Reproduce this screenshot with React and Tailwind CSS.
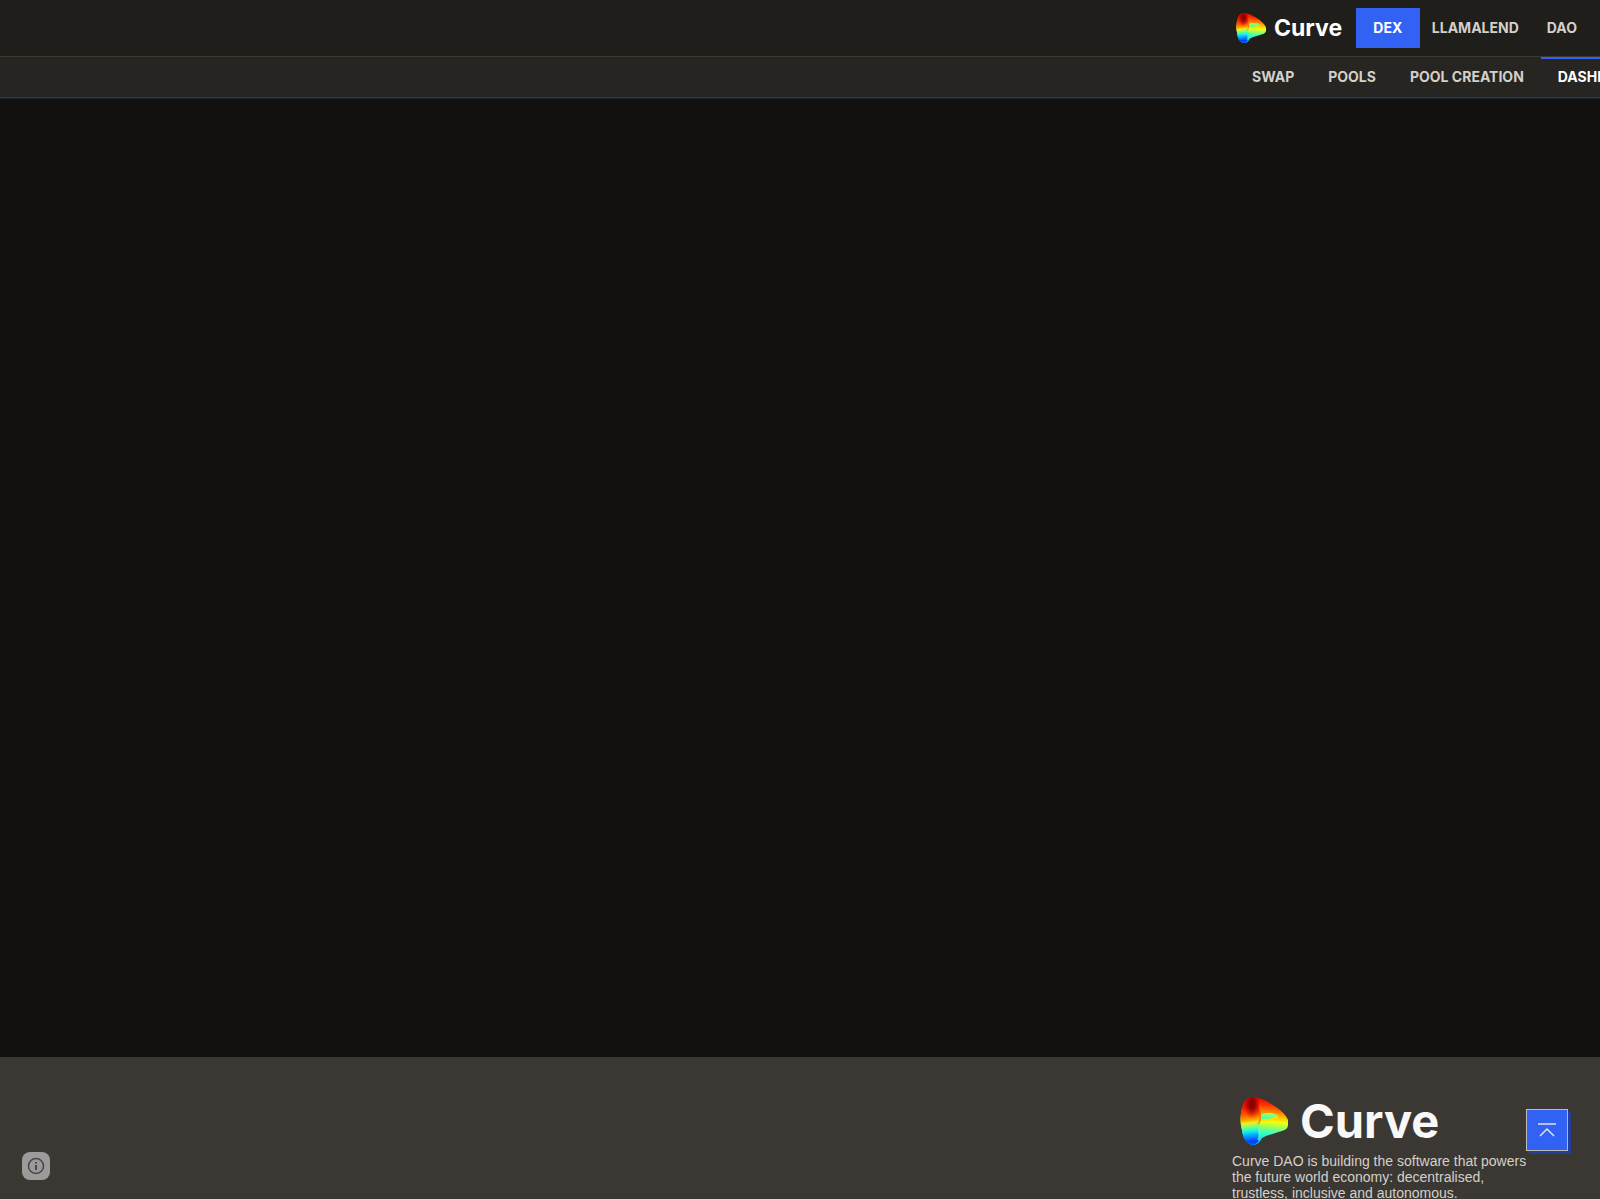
import React from "react";

const OUTLINE =
  "M13 0C18 0 27 4 33 8C41 13 46 18 48 23L48 28C48 31 46 33 42 34C36 36 27 38 22 41C20 45 17 48 13 48C7 47 3 42 2 33C0 26 0 16 3 8C5 3 8 0 13 0Z";
const BAND =
  "M13 0C17 4 21 13 21 23C20 27 18 29 18 33C19 38 20 41 18 45C16 47 15 48 13 48C7 47 3 42 2 33C0 26 0 16 3 8C5 3 8 0 13 0Z";

function CurveMark({ className, id }) {
  return (
    <svg viewBox="0 0 48 48" className={className} aria-hidden="true">
      <defs>
        <linearGradient id={id + "-body"} x1="24" y1="0" x2="20" y2="46" gradientUnits="userSpaceOnUse">
          <stop offset="0" stopColor="#e00400" />
          <stop offset=".16" stopColor="#ff3000" />
          <stop offset=".32" stopColor="#ff8800" />
          <stop offset=".44" stopColor="#ffd000" />
          <stop offset=".53" stopColor="#f0ff10" />
          <stop offset=".64" stopColor="#98ff60" />
          <stop offset=".78" stopColor="#30ffc8" />
          <stop offset="1" stopColor="#00d0ff" />
        </linearGradient>
        <linearGradient id={id + "-band"} x1="7" y1="0" x2="12" y2="48" gradientUnits="userSpaceOnUse">
          <stop offset="0" stopColor="#e00000" />
          <stop offset=".2" stopColor="#f01800" />
          <stop offset=".36" stopColor="#ff5400" />
          <stop offset=".48" stopColor="#ffa800" />
          <stop offset=".54" stopColor="#f0f010" />
          <stop offset=".62" stopColor="#80ff78" />
          <stop offset=".7" stopColor="#20f8e0" />
          <stop offset=".8" stopColor="#00a8ff" />
          <stop offset=".92" stopColor="#0040ff" />
          <stop offset="1" stopColor="#0060ff" />
        </linearGradient>
        <radialGradient id={id + "-dark"} cx="0" cy="0" r="1" gradientTransform="translate(12 7) scale(9 15)" gradientUnits="userSpaceOnUse">
          <stop offset="0" stopColor="#800000" />
          <stop offset=".35" stopColor="#900000" stopOpacity=".9" />
          <stop offset="1" stopColor="#d80000" stopOpacity="0" />
        </radialGradient>
        <linearGradient id={id + "-inner"} x1="0" y1="0" x2="0" y2="1">
          <stop offset="0" stopColor="#a0ff58" />
          <stop offset="1" stopColor="#40ffb8" />
        </linearGradient>
      </defs>
      <path d={OUTLINE} fill={"url(#" + id + "-body)"} />
      <path d="M21 17C28 15 36 16 38 19C35 22 28 22 21 23Z" fill={"url(#" + id + "-inner)"} />
      <path d="M21 23C29 23 36 22 38 19" fill="none" stroke="#ffe000" strokeWidth="1.5" />
      <path d={BAND} fill={"url(#" + id + "-band)"} />
      <path d={OUTLINE} fill={"url(#" + id + "-dark)"} />
      <path d="M20 16C21 21 20 25 18 27" fill="none" stroke="#ff7000" strokeWidth="1.5" opacity=".8" />
      <path d="M17 27C20 32 20 38 18 43" fill="none" stroke="#60ffb0" strokeWidth="1.5" opacity=".7" />
    </svg>
  );
}

function Tab({ children, active }) {
  return (
    <a
      href="#"
      aria-current={active ? "page" : undefined}
      className={
        "flex h-10 shrink-0 items-center border-t-2 px-[17px] pb-0.5 text-sm font-bold " +
        (active ? "border-[#3162f4] text-white" : "border-transparent text-[#d4d0ca]")
      }
    >
      {children}
    </a>
  );
}

export default function App() {
  return (
    <div className="flex min-h-screen flex-col overflow-hidden bg-[#11100e] font-['Inter',sans-serif]">
      <header className="shadow-[0_1px_1px_#18202a]">
        <div className="border-b border-[#3c3834] bg-[#1f1e1a]">
          <div className="ml-auto flex h-14 w-92 items-center">
            <a href="#" className="flex items-center gap-2 pl-1 text-[23px] font-bold text-white">
              <CurveMark id="top" className="size-[30px]" />
              Curve
            </a>
            <nav className="ml-auto flex whitespace-nowrap pr-[7px] text-sm font-bold text-[#d4d0ca]">
              <a href="#" className="flex h-10 w-16 items-center justify-center bg-[#3162f4] text-white">DEX</a>
              <a href="#" className="flex h-10 items-center px-3">LLAMALEND</a>
              <a href="#" className="flex h-10 items-center px-4">DAO</a>
            </nav>
          </div>
        </div>
        <div className="border-b border-[#3c3834] bg-[#262521]">
          <nav className="ml-auto flex w-[365px] overflow-hidden whitespace-nowrap">
            <Tab>SWAP</Tab>
            <Tab>POOLS</Tab>
            <Tab>POOL CREATION</Tab>
            <Tab active>DASHBOARD</Tab>
          </nav>
        </div>
      </header>

      <main className="grow" />

      <footer className="h-[143px] overflow-hidden border-b border-[#dddbd8] bg-[#3b3733] pt-10">
        <div className="ml-auto w-92">
          <div className="flex h-12 items-center gap-3 pl-2 text-[47px] font-bold text-[#f8f8f8]">
            <CurveMark id="foot" className="size-12" />
            Curve
          </div>
          <p className="mt-2 whitespace-nowrap font-['Liberation_Sans',sans-serif] text-sm/4 text-[#d4d0ca]">
            Curve DAO is building the software that powers
            <br />
            the future world economy: decentralised,
            <br />
            trustless, inclusive and autonomous.
          </p>
        </div>
      </footer>

      <button
        type="button"
        aria-label="Back to top"
        className="fixed right-8 bottom-[49px] flex size-[42px] items-center justify-center border border-[#bfbab2] bg-[#3162f4] text-[#e0e0e8] shadow-[3px_3px_0_#253e9c]"
      >
        <svg viewBox="0 0 20 16" className="h-4 w-5" fill="none" stroke="currentColor" strokeWidth="1.5" aria-hidden="true">
          <path d="M1 2H19M3 14L10 7L17 14" />
        </svg>
      </button>
      <button
        type="button"
        aria-label="Information"
        className="fixed bottom-5 left-[22px] flex size-7 items-center justify-center rounded-lg bg-[#9c9b99] text-[#45464b]"
      >
        <svg viewBox="0 0 18 18" className="size-[18px]" fill="none" stroke="currentColor" strokeWidth="1.5" aria-hidden="true">
          <circle cx="9" cy="9" r="7.5" />
          <path d="M9 8V13M9 5V6.5" strokeWidth="2" />
        </svg>
      </button>
    </div>
  );
}
